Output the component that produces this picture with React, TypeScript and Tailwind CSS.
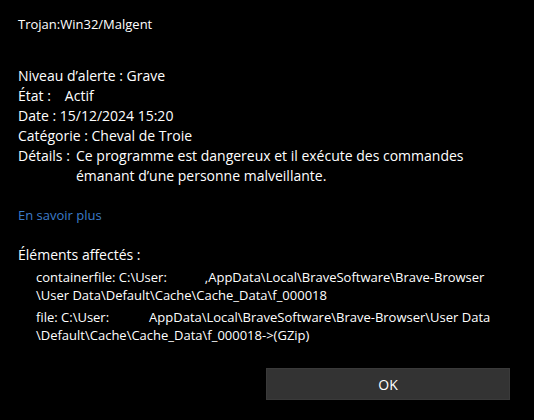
export default function App() {
  const font = { fontFamily: '"Open Sans", "Noto Sans", sans-serif' };
  return (
    <div
      className="flex h-[420px] w-[534px] flex-col bg-black px-[18px] pt-[14px] text-white"
      style={font}
    >
      <div className="text-[13px] leading-[20px]">Trojan:Win32/Malgent</div>

      <div className="mt-[32px] flex flex-col text-[14px] leading-[20px]">
        <div>Niveau d’alerte : Grave</div>
        <div>
          État :<span className="inline-block w-[14px]" />Actif
        </div>
        <div>Date : 15/12/2024 15:20</div>
        <div>Catégorie : Cheval de Troie</div>
        <div className="flex">
          <div className="w-[58px] shrink-0">Détails :</div>
          <div>
            <div>Ce programme est dangereux et il exécute des commandes</div>
            <div>émanant d’une personne malveillante.</div>
          </div>
        </div>
      </div>

      <a className="mt-[19px] w-fit text-[13px] leading-[20px] text-[#3d7cc9]" href="#">
        En savoir plus
      </a>

      <div className="mt-[20px] text-[14px] leading-[20px]">Éléments affectés :</div>

      <div className="mt-[3px] flex flex-col gap-[4px] pl-[18px] text-[13px] leading-[18px]">
        <div>
          <div className="whitespace-nowrap">
            containerfile: C:\User:<span className="inline-block w-[38px]" />,AppData\Local\BraveSoftware\Brave-Browser
          </div>
          <div>\User Data\Default\Cache\Cache_Data\f_000018</div>
        </div>
        <div>
          <div className="whitespace-nowrap">
            file: C:\User:<span className="inline-block w-[40px]" />AppData\Local\BraveSoftware\Brave-Browser\User Data
          </div>
          <div>\Default\Cache\Cache_Data\f_000018-&gt;(GZip)</div>
        </div>
      </div>

      <div className="mt-auto mb-[20px] flex justify-end pr-[6px]">
        <button className="h-[32px] w-[244px] border border-[#3a3a3a] bg-[#333333] text-[14px] text-white">
          OK
        </button>
      </div>
    </div>
  );
}
